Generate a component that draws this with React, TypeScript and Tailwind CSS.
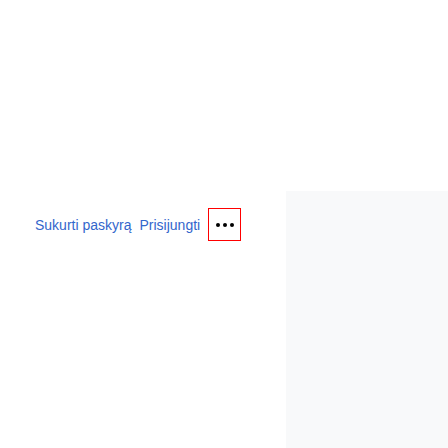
export default function App() {
  return (
    <div className="flex h-[448px] w-[448px] bg-white" style={{ fontFamily: "'Liberation Sans', Arial, sans-serif" }}>
      <div className="w-[286px] shrink-0 pl-[35px] pt-[208px]">
        <div className="flex items-center">
          <a href="#" className="text-[14px] leading-[20px] text-[color:#3366cc]">Sukurti paskyrą</a>
          <a href="#" className="ml-[8px] text-[14px] leading-[20px] text-[color:#3366cc]">Prisijungti</a>
          <button className="ml-[8px] flex h-[33px] w-[33px] items-center justify-center gap-[3px] border border-solid border-[color:#ff0000]">
            <span className="h-[4px] w-[4px] rounded-full bg-black" />
            <span className="h-[4px] w-[4px] rounded-full bg-black" />
            <span className="h-[4px] w-[4px] rounded-full bg-black" />
          </button>
        </div>
      </div>
      <div className="mt-[191px] flex-1 bg-[#f8f9fa]" />
    </div>
  );
}
